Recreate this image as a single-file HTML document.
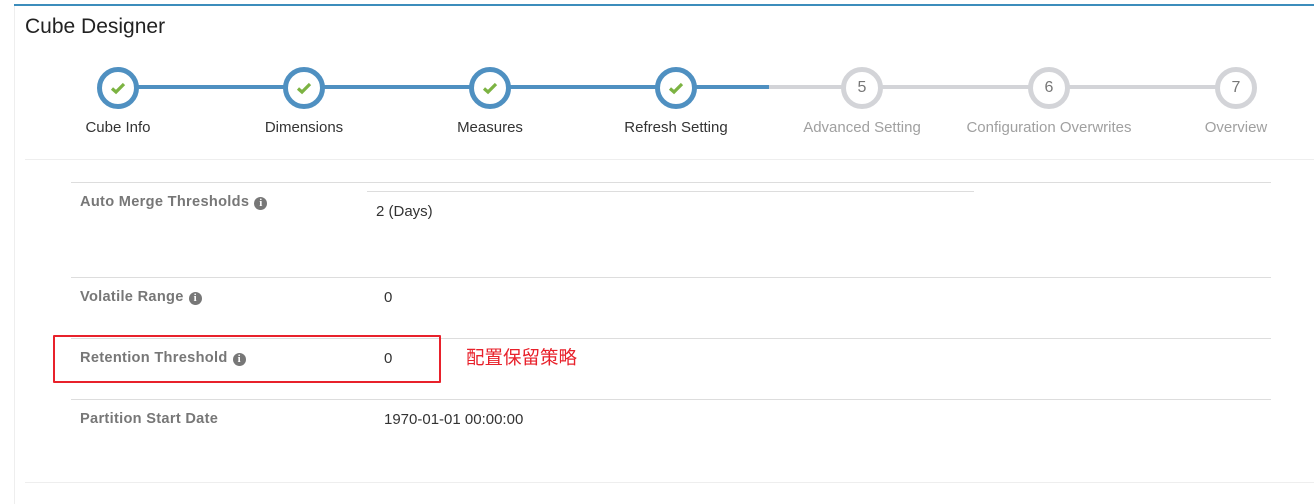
<!DOCTYPE html>
<html><head><meta charset="utf-8"><style>
body{margin:0;width:1314px;height:504px;background:#fff;font-family:"Liberation Sans",Arial,sans-serif;position:relative;overflow:hidden}
.a{position:absolute}
.c{position:absolute;width:32px;height:32px;border-radius:50%;background:#fff;top:67px;text-align:center;line-height:32px;font-size:16px;color:#777}
.done{border:5px solid #4f90c1}
.todo{border:5px solid #d3d4d8}
.lbl{position:absolute;top:119px;font-size:15px;width:220px;text-align:center;color:#333}
.g{color:#a0a0a0}
.k{position:absolute;left:80px;font-size:14.6px;letter-spacing:0.3px;font-weight:bold;color:#777}
.v{position:absolute;font-size:15px;color:#333}
.i{display:inline-block;width:13px;height:13px;border-radius:50%;background:#777;color:#fff;font-size:11px;font-weight:bold;line-height:13px;text-align:center;font-family:"Liberation Serif",serif;vertical-align:0px;margin-left:5px;letter-spacing:0}
.h{position:absolute;height:1px;background:#ddd}
</style></head><body>
<div class="a" style="left:14px;top:4px;width:1300px;height:2px;background:#3c8dbc"></div>
<div class="a" style="left:14px;top:6px;width:1px;height:498px;background:#eee"></div>
<div class="a" style="left:25px;top:15px;font-size:21px;color:#222">Cube Designer</div>
<div class="a" style="left:118px;top:85px;width:651px;height:4px;background:#4f90c1"></div>
<div class="a" style="left:769px;top:85px;width:467px;height:4px;background:#d3d4d8"></div>
<svg width="0" height="0" style="position:absolute"><defs><symbol id="ck" viewBox="0 0 16 16"><path d="M2 8.5 L6 12 L14 4" fill="none" stroke="#7cb342" stroke-width="3.2"/></symbol></defs></svg>
<div class="c done" style="left:97px"><svg width="16" height="16" style="margin-top:8px"><use href="#ck"/></svg></div>
<div class="c done" style="left:283px"><svg width="16" height="16" style="margin-top:8px"><use href="#ck"/></svg></div>
<div class="c done" style="left:469px"><svg width="16" height="16" style="margin-top:8px"><use href="#ck"/></svg></div>
<div class="c done" style="left:655px"><svg width="16" height="16" style="margin-top:8px"><use href="#ck"/></svg></div>
<div class="c todo" style="left:841px">5</div>
<div class="c todo" style="left:1028px">6</div>
<div class="c todo" style="left:1215px">7</div>
<div class="lbl" style="left:8px">Cube Info</div>
<div class="lbl" style="left:194px">Dimensions</div>
<div class="lbl" style="left:380px">Measures</div>
<div class="lbl" style="left:566px">Refresh Setting</div>
<div class="lbl g" style="left:752px">Advanced Setting</div>
<div class="lbl g" style="left:939px">Configuration Overwrites</div>
<div class="lbl g" style="left:1126px">Overview</div>
<div class="h" style="left:25px;top:159px;width:1289px;background:#eee"></div>
<div class="h" style="left:71px;top:182px;width:1200px"></div>
<div class="h" style="left:367px;top:191px;width:607px"></div>
<div class="h" style="left:71px;top:277px;width:1200px"></div>
<div class="h" style="left:71px;top:338px;width:1200px"></div>
<div class="h" style="left:71px;top:399px;width:1200px"></div>
<div class="h" style="left:25px;top:482px;width:1289px;background:#eee"></div>
<div class="k" style="top:194px">Auto Merge Thresholds<span class="i">i</span></div>
<div class="v" style="left:376px;top:203px">2 (Days)</div>
<div class="k" style="top:289px">Volatile Range<span class="i">i</span></div>
<div class="v" style="left:384px;top:289px">0</div>
<div class="k" style="top:350px">Retention Threshold<span class="i">i</span></div>
<div class="v" style="left:384px;top:350px">0</div>
<div class="k" style="top:411px">Partition Start Date</div>
<div class="v" style="left:384px;top:411px">1970-01-01 00:00:00</div>
<div class="a" style="left:53px;top:335px;width:384px;height:44px;border:2px solid #e8212b;border-radius:1px"></div>
<div class="a" style="left:466px;top:344px;font-size:18.5px;color:#e8212b;font-family:'Liberation Sans','Noto Sans CJK SC',sans-serif">配置保留策略</div>
</body></html>
